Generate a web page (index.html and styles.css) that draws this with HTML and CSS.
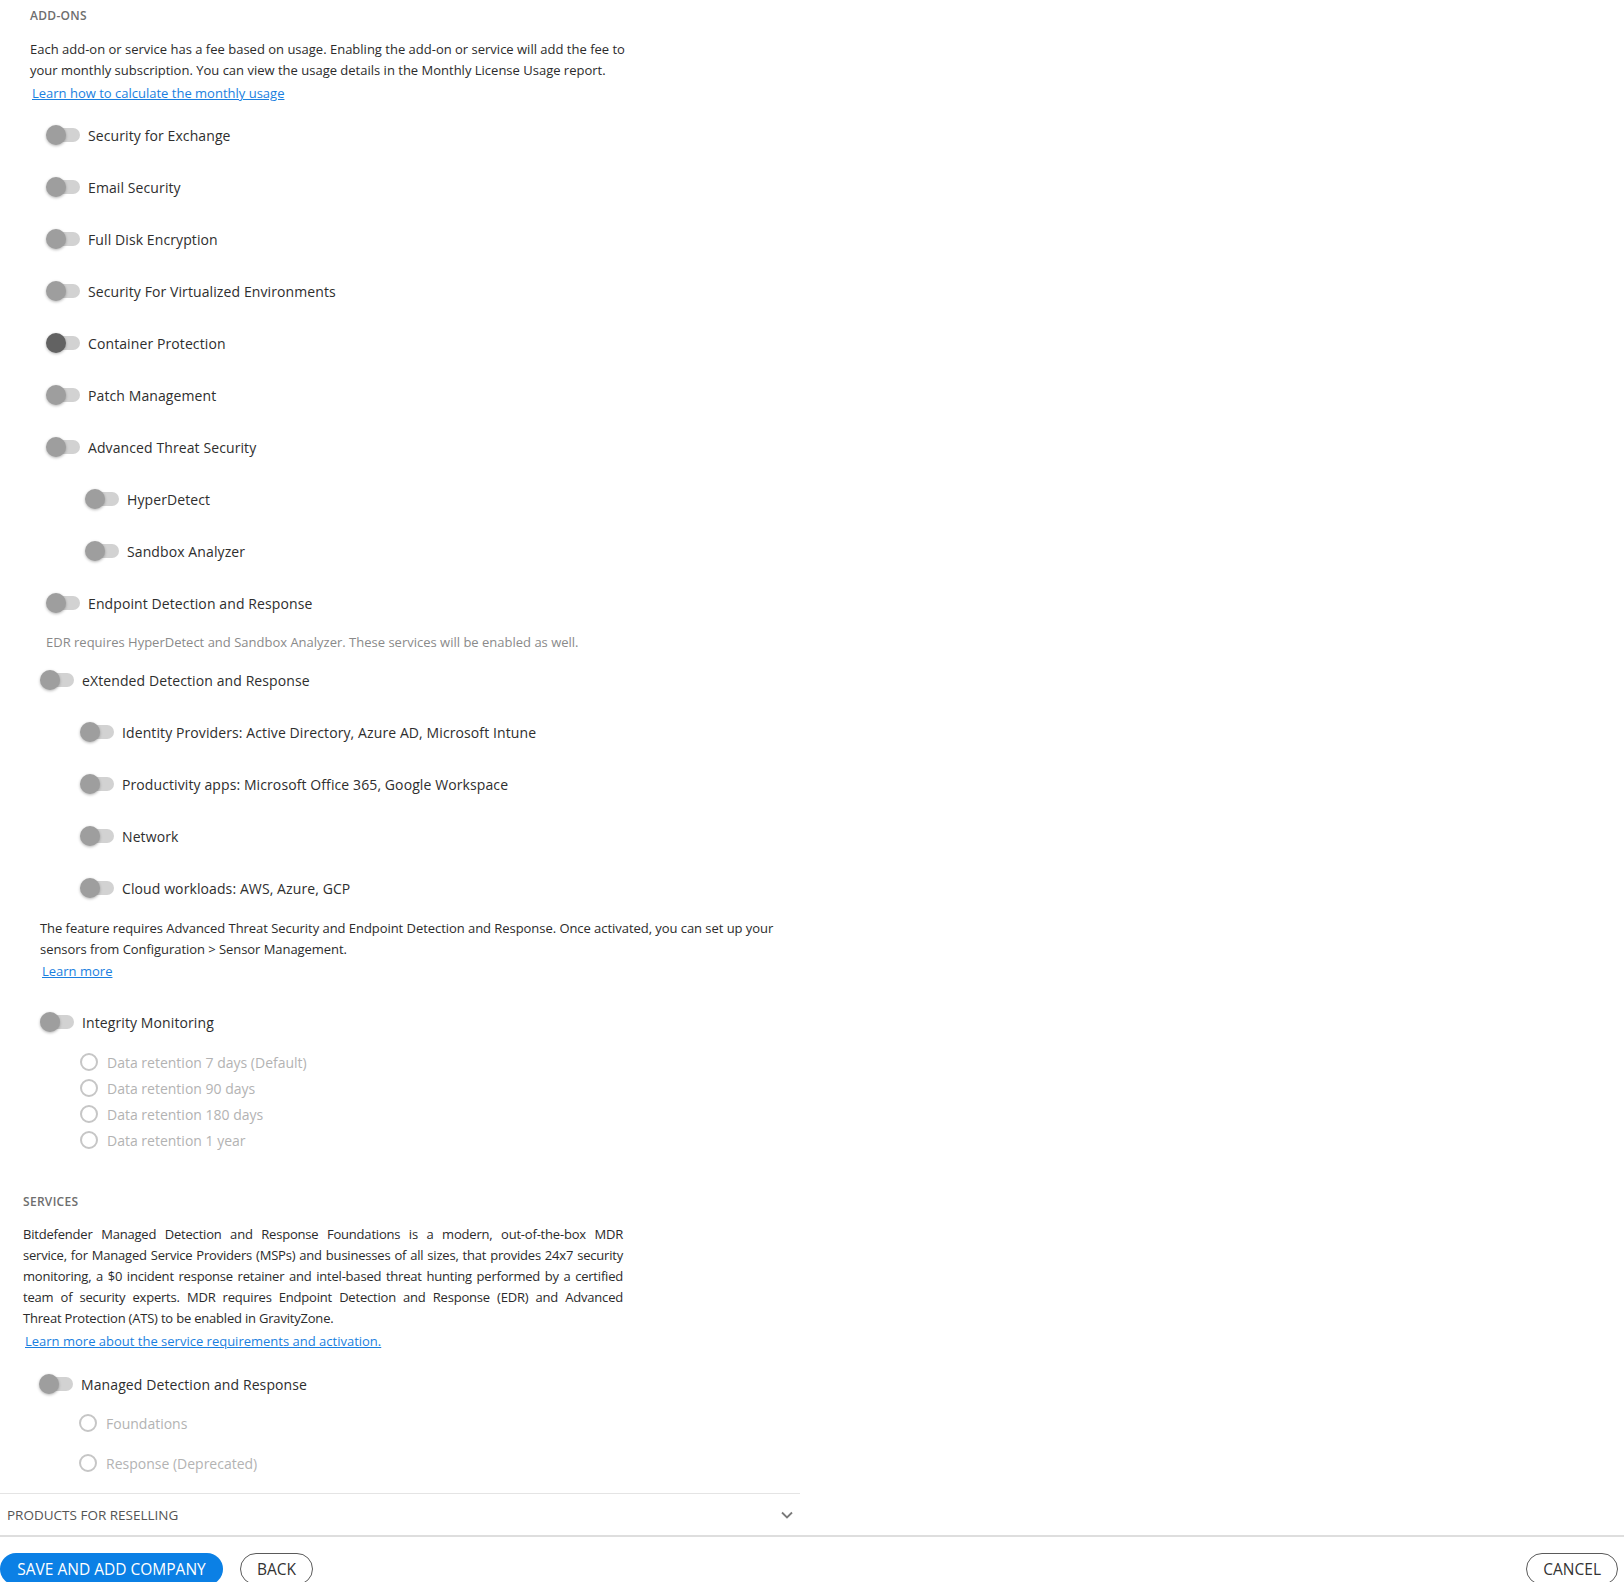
FILE: index.html
```html
<!DOCTYPE html>
<html lang="en">
<head>
<meta charset="utf-8">
<title>Add-ons and services</title>
<link rel="stylesheet" href="styles.css">
</head>
<body>
<div class="page">
  <div class="panel">
    <section class="addons">
      <h2 class="section-title">ADD-ONS</h2>
      <p class="desc">Each add-on or service has a fee based on usage. Enabling the add-on or service will add the fee to<br>your monthly subscription. You can view the usage details in the Monthly License Usage report.</p>
      <a class="link" href="#">Learn how to calculate the monthly usage</a>
      <div class="toggle-list">
        <div class="toggle-row"><span class="switch"></span><span class="label">Security for Exchange</span></div>
        <div class="toggle-row"><span class="switch"></span><span class="label">Email Security</span></div>
        <div class="toggle-row"><span class="switch"></span><span class="label">Full Disk Encryption</span></div>
        <div class="toggle-row"><span class="switch"></span><span class="label">Security For Virtualized Environments</span></div>
        <div class="toggle-row"><span class="switch focused"></span><span class="label">Container Protection</span></div>
        <div class="toggle-row"><span class="switch"></span><span class="label">Patch Management</span></div>
        <div class="toggle-row"><span class="switch"></span><span class="label">Advanced Threat Security</span></div>
        <div class="toggle-row nested"><span class="switch"></span><span class="label">HyperDetect</span></div>
        <div class="toggle-row nested"><span class="switch"></span><span class="label">Sandbox Analyzer</span></div>
        <div class="toggle-row"><span class="switch"></span><span class="label">Endpoint Detection and Response</span></div>
      </div>
      <p class="note">EDR requires HyperDetect and Sandbox Analyzer. These services will be enabled as well.</p>
    </section>

    <section class="xdr">
      <div class="toggle-row"><span class="switch"></span><span class="label">eXtended Detection and Response</span></div>
      <div class="toggle-row nested"><span class="switch"></span><span class="label">Identity Providers: Active Directory, Azure AD, Microsoft Intune</span></div>
      <div class="toggle-row nested"><span class="switch"></span><span class="label">Productivity apps: Microsoft Office 365, Google Workspace</span></div>
      <div class="toggle-row nested"><span class="switch"></span><span class="label">Network</span></div>
      <div class="toggle-row nested"><span class="switch"></span><span class="label">Cloud workloads: AWS, Azure, GCP</span></div>
      <p class="desc xdr-desc">The feature requires Advanced Threat Security and Endpoint Detection and Response. Once activated, you can set up your<br>sensors from Configuration &gt; Sensor Management.</p>
      <a class="link xdr-link" href="#">Learn more</a>

      <div class="toggle-row integrity"><span class="switch"></span><span class="label">Integrity Monitoring</span></div>
      <div class="radio-list">
        <div class="radio-row"><span class="radio"></span><span class="radio-label">Data retention 7 days (Default)</span></div>
        <div class="radio-row"><span class="radio"></span><span class="radio-label">Data retention 90 days</span></div>
        <div class="radio-row"><span class="radio"></span><span class="radio-label">Data retention 180 days</span></div>
        <div class="radio-row"><span class="radio"></span><span class="radio-label">Data retention 1 year</span></div>
      </div>
    </section>

    <section class="services">
      <h2 class="section-title">SERVICES</h2>
      <p class="desc justified">
        <span class="jl">Bitdefender Managed Detection and Response Foundations is a modern, out-of-the-box MDR</span>
        <span class="jl">service, for Managed Service Providers (MSPs) and businesses of all sizes, that provides 24x7 security</span>
        <span class="jl">monitoring, a $0 incident response retainer and intel-based threat hunting performed by a certified</span>
        <span class="jl">team of security experts. MDR requires Endpoint Detection and Response (EDR) and Advanced</span>
        <span class="jl last">Threat Protection (ATS) to be enabled in GravityZone.</span>
      </p>
      <a class="link" href="#">Learn more about the service requirements and activation.</a>
      <div class="toggle-row mdr"><span class="switch"></span><span class="label">Managed Detection and Response</span></div>
      <div class="radio-list spaced">
        <div class="radio-row"><span class="radio"></span><span class="radio-label">Foundations</span></div>
        <div class="radio-row"><span class="radio"></span><span class="radio-label">Response (Deprecated)</span></div>
      </div>
    </section>

    <div class="collapsible">
      <span class="collapsible-title">PRODUCTS FOR RESELLING</span>
      <svg class="chevron" width="12" height="8" viewBox="0 0 12 8"><polyline points="1,1.5 6,6.5 11,1.5" fill="none" stroke="#7a7a7a" stroke-width="1.8"/></svg>
    </div>
  </div>

  <footer class="footer">
    <div class="btn-group">
      <button class="btn primary">SAVE AND ADD COMPANY</button>
      <button class="btn outline">BACK</button>
    </div>
    <button class="btn outline">CANCEL</button>
  </footer>
</div>
</body>
</html>
```

FILE: styles.css
```css
html, body {
  margin: 0;
  padding: 0;
  background: #ffffff;
}

body {
  height: 1582px;
  overflow: hidden;
  font-family: "Open Sans", "Liberation Sans", sans-serif;
  color: #333333;
}

.page {
  display: flex;
  flex-direction: column;
}

.panel {
  width: 800px;
}

.section-title {
  margin: 0;
  font-size: 12px;
  line-height: 16px;
  font-weight: 600;
  color: #6e6e6e;
  letter-spacing: 0.3px;
}

.addons {
  padding: 8px 0 0 30px;
}

.desc {
  margin: 15px 0 0;
  font-size: 13px;
  line-height: 21px;
  color: #2b2b2b;
  white-space: nowrap;
}

.link {
  display: block;
  width: fit-content;
  margin: 1px 0 0 2px;
  font-size: 13px;
  line-height: 22px;
  color: #1a7fe0;
  text-decoration: underline;
}

.toggle-list {
  margin-top: 5px;
}

.toggle-row {
  height: 52px;
  display: flex;
  align-items: center;
  padding-left: 16px;
}

.toggle-row.nested {
  padding-left: 55px;
}

.switch {
  position: relative;
  flex: none;
  width: 31px;
  height: 14px;
  margin: 0 8px 0 3px;
  border-radius: 7px;
  background: #d2d2d2;
}

.switch::before {
  content: "";
  position: absolute;
  left: -3px;
  top: -3px;
  width: 20px;
  height: 20px;
  border-radius: 50%;
  background: #9e9e9e;
  box-shadow: 0 1px 3px rgba(0, 0, 0, 0.3);
}

.switch.focused::before {
  background: #626262;
}

.label {
  font-size: 14px;
  letter-spacing: 0.1px;
  color: #2e2e2e;
  white-space: nowrap;
}

.note {
  margin: 4px 0 0 16px;
  font-size: 13px;
  line-height: 18px;
  color: #8a8a8a;
}

.xdr {
  padding-left: 24px;
  margin-top: 3px;
}

.xdr .toggle-row.nested {
  padding-left: 56px;
}

.xdr-desc {
  margin: 4px 0 0 16px;
  letter-spacing: -0.05px;
}

.xdr-link {
  margin: 0 0 0 18px;
}

.toggle-row.integrity {
  margin-top: 14px;
}

.radio-list {
  margin-top: 1px;
  display: flex;
  flex-direction: column;
}

.radio-list.spaced {
  margin-top: 0;
  gap: 14px;
}

.radio-row {
  height: 26px;
  display: flex;
  align-items: center;
  padding-left: 56px;
}

.radio {
  flex: none;
  box-sizing: border-box;
  width: 18px;
  height: 18px;
  margin-right: 9px;
  border: 2px solid #c6c6c6;
  border-radius: 50%;
}

.radio-label {
  font-size: 14px;
  color: #b3b3b3;
  white-space: nowrap;
}

.services {
  padding: 41px 0 0 23px;
}

.services .desc {
  margin-top: 14px;
}

.justified {
  width: 600px;
  white-space: normal;
  letter-spacing: -0.2px;
}

.jl {
  display: block;
  text-align: justify;
  text-align-last: justify;
}

.jl.last {
  text-align-last: left;
}

.toggle-row.mdr {
  margin-top: 6px;
}

.collapsible {
  margin-top: 17px;
  height: 41px;
  border-top: 1px solid #e4e4e4;
  padding: 0 7px;
  display: flex;
  align-items: center;
  justify-content: space-between;
}

.collapsible-title {
  font-size: 13.5px;
  color: #555555;
}

.chevron {
  display: block;
}

.footer {
  border-top: 2px solid #dedede;
  padding: 16px 6px 0 0;
  display: flex;
  justify-content: space-between;
  align-items: flex-start;
}

.btn-group {
  display: flex;
  gap: 17px;
}

.btn {
  height: 32px;
  padding: 0 16px;
  border-radius: 16px;
  font-family: "Open Sans", "Liberation Sans", sans-serif;
  font-size: 15.5px;
  font-weight: 500;
  cursor: pointer;
}

.btn.primary {
  width: 223px;
  border: none;
  background: #0b80e5;
  color: #ffffff;
}

.btn.outline {
  border: 1px solid #5a5a5a;
  background: #ffffff;
  color: #333333;
}
```
